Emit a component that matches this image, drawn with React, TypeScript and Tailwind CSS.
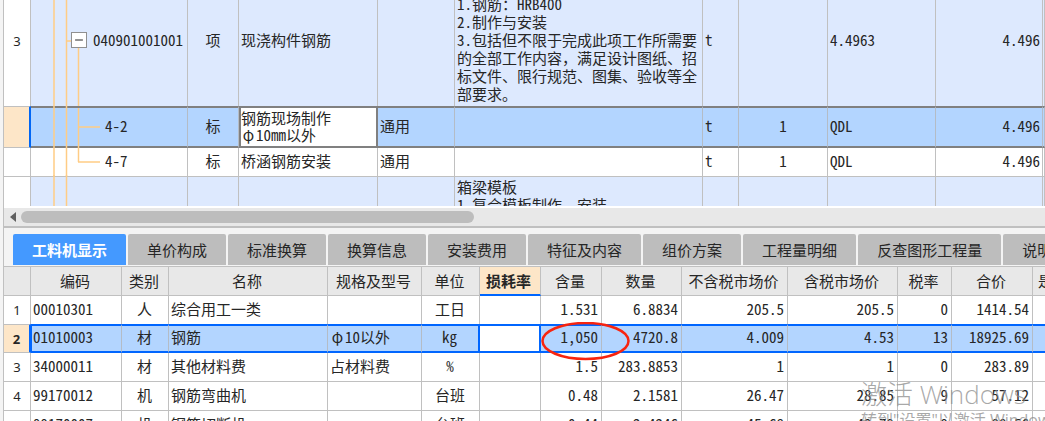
import { Minus } from 'lucide-react';
import { useState } from 'react';

interface IListItem {
  id: string;
  no: string;
  code: string;
  kind: string;
  name: string[];
  spec: string;
  feature: string[];
  unit: string;
  rate: string;
  formula: string;
  quantity: string;
  level: 'item' | 'branch' | 'last' | 'next';
}

const LIST_ITEMS: IListItem[] = [
  {
    id: 'rebar',
    no: '3',
    code: '040901001001',
    kind: '项',
    name: ['现浇构件钢筋'],
    spec: '',
    feature: [
      '现浇构件钢筋',
      '1.钢筋：HRB400',
      '2.制作与安装',
      '3.包括但不限于完成此项工作所需要',
      '的全部工作内容，满足设计图纸、招',
      '标文件、限行规范、图集、验收等全',
      '部要求。',
    ],
    unit: 't',
    rate: '',
    formula: '4.4963',
    quantity: '4.496',
    level: 'item',
  },
  {
    id: 'rebar-site',
    no: '',
    code: '4-2',
    kind: '标',
    name: ['钢筋现场制作', 'φ10mm以外'],
    spec: '通用',
    feature: [],
    unit: 't',
    rate: '1',
    formula: 'QDL',
    quantity: '4.496',
    level: 'branch',
  },
  {
    id: 'rebar-bridge',
    no: '',
    code: '4-7',
    kind: '标',
    name: ['桥涵钢筋安装'],
    spec: '通用',
    feature: [],
    unit: 't',
    rate: '1',
    formula: 'QDL',
    quantity: '4.496',
    level: 'last',
  },
  {
    id: 'formwork',
    no: '',
    code: '',
    kind: '',
    name: [],
    spec: '',
    feature: ['箱梁模板', '1.复合模板制作、安装'],
    unit: '',
    rate: '',
    formula: '',
    quantity: '',
    level: 'next',
  },
];

const ROW_HEIGHT = {
  item: 'h-[130px]',
  branch: 'h-[42px]',
  last: 'h-[29px]',
  next: 'h-[44px]',
};

const TABS = [
  '工料机显示',
  '单价构成',
  '标准换算',
  '换算信息',
  '安装费用',
  '特征及内容',
  '组价方案',
  '工程量明细',
  '反查图形工程量',
  '说明信息',
];

const HEADERS = [
  '编码',
  '类别',
  '名称',
  '规格及型号',
  '单位',
  '损耗率',
  '含量',
  '数量',
  '不含税市场价',
  '含税市场价',
  '税率',
  '合价',
];

// code, kind, name, spec, unit, loss, content, quantity, net price, gross price, tax, total
const RESOURCES = [
  ['00010301', '人', '综合用工一类', '', '工日', '', '1.531', '6.8834', '205.5', '205.5', '0', '1414.54'],
  ['01010003', '材', '钢筋', 'φ10以外', 'kg', '', '1,050', '4720.8', '4.009', '4.53', '13', '18925.69'],
  ['34000011', '材', '其他材料费', '占材料费', '%', '', '1.5', '283.8853', '1', '1', '0', '283.89'],
  ['99170012', '机', '钢筋弯曲机', '', '台班', '', '0.48', '2.1581', '26.47', '28.85', '9', '57.12'],
  ['99170007', '机', '钢筋切断机', '', '台班', '', '0.44', '2.4246', '45.68', '49.79', '9', '88.56'],
];

const LOSS_COLUMN = 5;
const CONTENT_COLUMN = 6;

const alignOf = (index: number) => {
  if (index === 1 || index === 4) return 'text-center';
  return index >= LOSS_COLUMN ? 'text-right' : 'text-left';
};

// Latin text is half width, but φ and the Chinese comma take a full cell
const Label = ({ text }: { text: string }) => (
  <>
    {text.split(/([φ，])/).map((part, index) => {
      if (part === 'φ') {
        return (
          <span key={index} className="inline-block w-[15px] text-center">
            φ
          </span>
        );
      }
      if (part === '，') {
        return (
          <span key={index} className="[font-feature-settings:normal]">
            ，
          </span>
        );
      }
      return part;
    })}
  </>
);

const TreeLines = ({ level }: { level: IListItem['level'] }) => (
  <svg
    className="pointer-events-none absolute top-0 left-0 h-full w-full overflow-visible"
    stroke="#ffcc85"
    strokeWidth="1.5"
  >
    <line x1="23" x2="23" y1="-2" y2="100%" />
    <line x1="35.5" x2="35.5" y1="-2" y2="100%" />
    {level === 'item' && (
      <>
        <line x1="35" x2="41" y1="50%" y2="50%" />
        <line x1="47.5" x2="47.5" y1="50%" y2="100%" />
      </>
    )}
    {level === 'branch' && (
      <>
        <line x1="47.5" x2="47.5" y1="0" y2="100%" />
        <line x1="47" x2="69" y1="50%" y2="50%" />
      </>
    )}
    {level === 'last' && (
      <>
        <line x1="47.5" x2="47.5" y1="-2" y2="50%" />
        <line x1="47" x2="69" y1="50%" y2="50%" />
      </>
    )}
  </svg>
);

const ItemRow = ({ item }: { item: IListItem }) => {
  const selected = item.level === 'branch';
  const shaded = item.level === 'item' || item.level === 'next';
  const edge = selected
    ? 'border-y-2 border-y-[#808080] border-r border-r-[#b4bcc6]'
    : `border-r border-r-[#c0c0c0] ${
        item.level === 'item' ? '' : 'border-b border-b-[#c0c0c0]'
      }`;
  const fill = selected ? 'bg-[#b3d5ff]' : shaded ? 'bg-[#dde9fe]' : 'bg-white';
  const cell = `px-[2px] pb-[2px] ${edge} ${fill}`;

  return (
    <tr className={ROW_HEIGHT[item.level]}>
      <th
        className={`text-center font-['Noto_Sans'] text-[13px] font-normal ${
          selected
            ? 'border-y border-r-2 border-y-[#c0c0c0] border-r-[#0066f5] bg-[#fde6c8]'
            : `bg-white ${edge}`
        }`}
      >
        {item.no}
      </th>
      <td className={`relative ${cell}`}>
        <TreeLines level={item.level} />
        {item.level === 'item' ? (
          <div className="relative flex items-center gap-[6px] pl-[38px]">
            <button
              aria-label="折叠"
              className="flex h-4 w-4 items-center justify-center border border-[#909090] bg-white"
            >
              <Minus size={12} strokeWidth={2} />
            </button>
            {item.code}
          </div>
        ) : (
          <div className="pl-[72px]">{item.code}</div>
        )}
      </td>
      <td className={`text-center ${cell}`}>{item.kind}</td>
      <td
        className={
          selected
            ? 'border-x-2 border-y-2 border-[#808080] bg-white pb-[2px] leading-[17px]'
            : cell
        }
      >
        {item.name.map((line) => (
          <div key={line}>
            <Label text={line} />
          </div>
        ))}
      </td>
      <td className={cell}>{item.spec}</td>
      <td className={`${cell} ${item.level === 'next' ? 'pt-[1px] align-top' : ''}`}>
        {item.feature.map((line) => (
          <div key={line}>
            <Label text={line} />
          </div>
        ))}
      </td>
      <td className={cell}>{item.unit}</td>
      <td className={`text-center ${cell}`}>{item.rate}</td>
      <td className={cell}>{item.formula}</td>
      <td className={`text-right ${cell}`}>{item.quantity}</td>
      <td className={`${edge} ${fill}`} />
    </tr>
  );
};

const ItemTable = () => (
  <div className="h-[206px] overflow-hidden bg-white">
    <table className="-mt-6 w-full table-fixed border-separate border-spacing-0">
      <colgroup>
        <col className="w-[27px]" />
        <col className="w-[157px]" />
        <col className="w-[51px]" />
        <col className="w-[139px]" />
        <col className="w-[77px]" />
        <col className="w-[248px]" />
        <col className="w-[36px]" />
        <col className="w-[89px]" />
        <col className="w-[108px]" />
        <col className="w-[107px]" />
        <col />
      </colgroup>
      <tbody>
        {LIST_ITEMS.map((item) => (
          <ItemRow key={item.id} item={item} />
        ))}
      </tbody>
    </table>
  </div>
);

const ScrollBar = () => (
  <div className="border-t-2 border-white">
    <div className="flex h-[18px] items-center bg-[#e8e8e8]">
      <button aria-label="向左滚动" className="flex w-[17px] justify-center">
        <svg width="6" height="10" viewBox="0 0 6 10" fill="#606060">
          <path d="M6 0v10L0 5z" />
        </svg>
      </button>
      <div className="h-3 w-[43.5%] rounded-full bg-[#bdbdbd]" />
    </div>
  </div>
);

const ResourceTable = () => (
  <table className="w-full table-fixed border-separate border-spacing-0 border-t border-[#c0c0c0]">
    <colgroup>
      <col className="w-[27px]" />
      <col className="w-[91px]" />
      <col className="w-[47px]" />
      <col className="w-[159px]" />
      <col className="w-[94px]" />
      <col className="w-[58px]" />
      <col className="w-[61px]" />
      <col className="w-[61px]" />
      <col className="w-[80px]" />
      <col className="w-[106px]" />
      <col className="w-[110px]" />
      <col className="w-[54px]" />
      <col className="w-[81px]" />
      <col />
    </colgroup>
    <thead>
      <tr className="h-[29px]">
        <th className="border-r border-b border-[#c0c0c0] bg-[#e8e8e8]" />
        {HEADERS.map((header, index) => (
          <th
            key={header}
            className={
              index === LOSS_COLUMN
                ? 'border-r border-b-2 border-r-[#c0c0c0] border-b-[#0066ff] bg-[#fde6c8] pr-[3px] font-bold'
                : 'border-r border-b border-[#c0c0c0] bg-[#e8e8e8] pr-[2px] font-normal'
            }
          >
            {header}
          </th>
        ))}
        <th className="overflow-hidden border-b border-[#c0c0c0] bg-[#e8e8e8] pl-[5px] text-left font-normal">
          是否暂估
        </th>
      </tr>
    </thead>
    <tbody>
      {RESOURCES.map((row, rowIndex) => {
        const selected = rowIndex === 1;
        const line = selected
          ? 'border-y-2 border-y-[#0066ff] bg-[#b3d5ff]'
          : rowIndex === 0
          ? 'bg-white'
          : 'border-b border-b-[#c0c0c0] bg-white';

        return (
          <tr key={row[0]} className={rowIndex === 0 ? 'h-[28px]' : 'h-[29px]'}>
            <th
              className={`text-center font-['Noto_Sans'] text-[13px] ${
                selected
                  ? 'border-y border-r-2 border-y-[#c0c0c0] border-r-[#0066ff] bg-[#fde6c8] font-bold'
                  : `border-r border-r-[#c0c0c0] font-normal ${line}`
              }`}
            >
              {rowIndex + 1}
            </th>
            {row.map((value, index) => {
              let side = 'border-r border-r-[#c0c0c0] pl-[2px]';
              if (selected && index === 0) {
                side = 'border-x border-l-[#0066ff] border-r-[#b4bcc6] pl-[1px]';
              } else if (selected && (index === 4 || index === LOSS_COLUMN)) {
                side = 'border-r-2 border-r-[#0066ff] pl-[2px]';
              } else if (selected) {
                side = 'border-r border-r-[#b4bcc6] pl-[2px]';
              }

              return (
                <td
                  key={HEADERS[index]}
                  className={`relative pr-[3px] pb-[3px] ${alignOf(index)} ${side} ${
                    selected && index === LOSS_COLUMN
                      ? 'border-y-2 border-y-[#0066ff] bg-white'
                      : line
                  }`}
                >
                  <Label text={value} />
                  {selected && index === CONTENT_COLUMN && (
                    <svg
                      className="pointer-events-none absolute -top-1 left-0 z-10"
                      width="90"
                      height="40"
                      fill="none"
                    >
                      <ellipse
                        cx="44.5"
                        cy="19"
                        rx="43"
                        ry="18"
                        stroke="#f8240f"
                        strokeWidth="2.5"
                      />
                    </svg>
                  )}
                </td>
              );
            })}
            <td className={line} />
          </tr>
        );
      })}
    </tbody>
  </table>
);

const App = () => {
  const [activeTab, setActiveTab] = useState(TABS[0]);

  return (
    <main className="relative h-screen overflow-hidden bg-[#f4f4f4] pl-[3px] font-['Noto_Sans_CJK_SC',sans-serif] text-[15px] leading-[18px] whitespace-nowrap text-[#262626] [font-feature-settings:'hwid']">
      <div className="border-l border-[#c0c0c0]">
        <ItemTable />
        <ScrollBar />
        <nav className="flex gap-[2px] overflow-hidden border-t-2 border-[#c0c0c0] pt-[6px] pl-[9px]">
          {TABS.map((tab) => (
            <button
              key={tab}
              onClick={() => setActiveTab(tab)}
              className={`mb-[1px] h-[31px] shrink-0 rounded-t-xs px-[19px] ${
                tab === activeTab
                  ? 'bg-[#4499ff] font-bold text-white'
                  : 'bg-[#bdbdbd]'
              }`}
            >
              {tab}
            </button>
          ))}
        </nav>
        <ResourceTable />
      </div>

      <div className="pointer-events-none absolute right-0 bottom-0 z-20 h-[44px] w-[184px] overflow-hidden font-['Open_Sans','Noto_Sans_CJK_SC',sans-serif] text-[#8c8c8c]/75">
        <div className="text-[26px] leading-[34px] font-light">激活 Windows</div>
        <div className="text-base leading-[18px]">转到"设置"以激活 Windows。</div>
      </div>
    </main>
  );
};

export default App;
